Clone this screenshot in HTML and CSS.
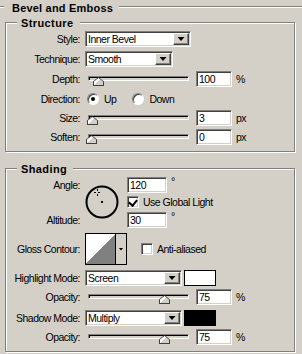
FILE: index.html
```html
<!DOCTYPE html>
<html lang="en">
<head>
  <meta charset="UTF-8">
  <title>Bevel and Emboss</title>
  <link rel="stylesheet" href="styles.css">
</head>
<body>

<div class="panel">
  <div class="panel-title">
    <span class="rule rule-short"></span>
    <span class="panel-name">Bevel and Emboss</span>
    <span class="rule"></span>
  </div>

  <!-- Structure -->
  <div class="group structure">
    <div class="group-title">Structure</div>

    <div class="row row-first">
      <span class="label">Style:</span>
      <div class="select select-style"><span class="select-value">Inner Bevel</span><span class="select-btn"></span></div>
    </div>

    <div class="row">
      <span class="label">Technique:</span>
      <div class="select select-tech"><span class="select-value">Smooth</span><span class="select-btn"></span></div>
    </div>

    <div class="row">
      <span class="label">Depth:</span>
      <div class="slider"><div class="track"></div><span class="thumb" style="left:8px"></span></div>
      <span class="num">100</span><span class="unit">%</span>
    </div>

    <div class="row">
      <span class="label">Direction:</span>
      <span class="radio checked"></span><span class="radio-text">Up</span>
      <span class="radio radio-2"></span><span class="radio-text">Down</span>
    </div>

    <div class="row row-tight">
      <span class="label">Size:</span>
      <div class="slider"><div class="track"></div><span class="thumb" style="left:2px"></span></div>
      <span class="num">3</span><span class="unit">px</span>
    </div>

    <div class="row row-tight">
      <span class="label">Soften:</span>
      <div class="slider"><div class="track"></div><span class="thumb" style="left:1px"></span></div>
      <span class="num">0</span><span class="unit">px</span>
    </div>
  </div>

  <!-- Shading -->
  <div class="group shading">
    <div class="group-title">Shading</div>

    <div class="angle-block">
      <div class="angle-labels">
        <span class="label">Angle:</span>
        <span class="label label-alt">Altitude:</span>
      </div>
      <svg class="dial" width="34" height="34" viewBox="0 0 34 34">
        <circle cx="17" cy="17" r="15.5" fill="#d4d0c8" stroke="#000" stroke-width="2"/>
        <path d="M9 7.5h2M13 7.5h2M12.5 4v2M12.5 9v2" stroke="#000" stroke-width="1"/>
        <rect x="16" y="16" width="2" height="2" fill="#000"/>
      </svg>
      <div class="angle-fields">
        <div class="field-row">
          <span class="num num-wide">120</span><span class="deg">°</span>
        </div>
        <div class="check-row">
          <span class="check checked"></span><span class="check-text">Use Global Light</span>
        </div>
        <div class="field-row field-alt">
          <span class="num num-wide">30</span><span class="deg">°</span>
        </div>
      </div>
    </div>

    <div class="row row-gloss">
      <span class="label">Gloss Contour:</span>
      <div class="contour"><span class="contour-preview"></span><span class="contour-btn"></span></div>
      <span class="check check-aa"></span><span class="check-text">Anti-aliased</span>
    </div>

    <div class="row row-mode">
      <span class="label">Highlight Mode:</span>
      <div class="select select-mode"><span class="select-value">Screen</span><span class="select-btn"></span></div>
      <span class="swatch swatch-white"></span>
    </div>

    <div class="row row-tight">
      <span class="label">Opacity:</span>
      <div class="slider"><div class="track"></div><span class="thumb" style="left:74px"></span></div>
      <span class="num">75</span><span class="unit">%</span>
    </div>

    <div class="row row-mode">
      <span class="label">Shadow Mode:</span>
      <div class="select select-mode"><span class="select-value">Multiply</span><span class="select-btn"></span></div>
      <span class="swatch swatch-black"></span>
    </div>

    <div class="row row-tight">
      <span class="label">Opacity:</span>
      <div class="slider"><div class="track"></div><span class="thumb" style="left:74px"></span></div>
      <span class="num">75</span><span class="unit">%</span>
    </div>
  </div>
</div>

</body>
</html>
```

FILE: styles.css
```css
* { box-sizing: border-box; }

body {
  margin: 0;
  background: #d4d0c8;
  font-family: "Liberation Sans", Arial, sans-serif;
  font-size: 10.5px;
  letter-spacing: -0.5px;
  color: #000;
}

.panel {
  width: 302px;
  height: 354px;
  overflow: hidden;
}

/* Section headers */
.panel-title {
  display: flex;
  margin-top: 2px;
  height: 13px;
  font-size: 11px;
  font-weight: bold;
  letter-spacing: 0.2px;
  line-height: 13px;
}

.panel-name {
  padding: 0 6px 0 8px;
}

.rule {
  flex: 1;
  height: 2px;
  margin-top: 4px;
  border-top: 1px solid #808080;
  border-bottom: 1px solid #fff;
}

.rule-short {
  flex: none;
  width: 4px;
}

.group {
  margin-left: 5px;
  width: 290px;
  border: 1px solid #808080;
  box-shadow: inset 1px 1px #fff, 1px 1px #fff;
}

.structure {
  margin-top: 7px;
  height: 130px;
}

.shading {
  margin-top: 16px;
  height: 184px;
}

.group-title {
  width: fit-content;
  margin: -6px 0 0 11px;
  padding: 0 6px 0 4px;
  background: #d4d0c8;
  font-size: 11px;
  font-weight: bold;
  letter-spacing: 0.4px;
  line-height: 13px;
}

/* Rows */
.row {
  display: flex;
  align-items: center;
  height: 16px;
  margin-top: 4px;
}

.row-first { margin-top: 1px; }
.row-tight { margin-top: 3px; }
.row-mode { margin-top: 5px; }

.label {
  flex: none;
  width: 74px;
  text-align: right;
  line-height: 16px;
}

/* Dropdowns */
.select {
  display: flex;
  height: 16px;
  margin-left: 5px;
  padding: 1px;
  background: #fff;
  border: 1px solid;
  border-color: #808080 #fff #fff #808080;
  box-shadow: inset 1px 1px #404040, inset -1px -1px #d4d0c8;
}

.select-style { width: 106px; }
.select-tech { width: 88px; }
.select-mode { width: 97px; }

.select-value {
  flex: 1;
  padding-left: 1px;
  line-height: 13px;
}

.select-btn {
  display: flex;
  align-items: center;
  justify-content: center;
  width: 16px;
  height: 12px;
  background: #d4d0c8;
  border: 1px solid;
  border-color: #fff #404040 #404040 #fff;
  box-shadow: inset -1px -1px #808080;
}

.select-btn::after,
.contour-btn::after {
  content: "";
  width: 7px;
  height: 4px;
  background: #000;
  clip-path: polygon(0 0, 100% 0, 50% 100%);
}

/* Sliders */
.slider {
  position: relative;
  flex: none;
  width: 106px;
  height: 16px;
  margin-left: 5px;
}

.track {
  width: 101px;
  height: 5px;
  margin: 5px 0 0 3px;
  background: #d4d0c8;
  border: 1px solid;
  border-color: #808080 #fff #fff #808080;
  box-shadow: inset 1px 1px #000;
}

.thumb {
  position: absolute;
  top: 6px;
  width: 11px;
  height: 9px;
  background: #404040;
  clip-path: polygon(50% 0, 100% 50%, 100% 100%, 0 100%, 0 50%);
}

.thumb::after {
  content: "";
  position: absolute;
  left: 1px;
  top: 1px;
  width: 9px;
  height: 7px;
  background: linear-gradient(135deg, #fff 45%, #d4d0c8 45%);
  clip-path: polygon(50% 0, 100% 50%, 100% 100%, 0 100%, 0 50%);
}

/* Number fields */
.num {
  flex: none;
  width: 36px;
  height: 16px;
  margin-left: 5px;
  padding: 0 2px;
  background: #fff;
  border: 1px solid;
  border-color: #808080 #fff #fff #808080;
  box-shadow: inset 1px 1px #404040, inset -1px -1px #d4d0c8;
  line-height: 14px;
}

.num-wide {
  width: 40px;
  margin-left: 0;
}

.unit { margin-left: 4px; }

/* Radios and checkboxes */
.radio {
  position: relative;
  flex: none;
  width: 12px;
  height: 12px;
  margin-left: 7px;
  border-radius: 50%;
  background: #fff;
  border: 1px solid;
  border-color: #808080 #fff #fff #808080;
  box-shadow: inset 1px 1px #404040;
}

.radio.checked::after {
  content: "";
  position: absolute;
  left: 3px;
  top: 3px;
  width: 4px;
  height: 4px;
  border-radius: 50%;
  background: #000;
}

.radio-2 { margin-left: 16px; }
.radio-text { margin-left: 5px; }

.check {
  position: relative;
  flex: none;
  width: 12px;
  height: 12px;
  background: #fff;
  border: 1px solid;
  border-color: #808080 #fff #fff #808080;
  box-shadow: inset 1px 1px #404040, inset -1px -1px #d4d0c8;
}

.check.checked::after {
  content: "";
  position: absolute;
  left: 2px;
  top: 1px;
  width: 4px;
  height: 6px;
  border: solid #000;
  border-width: 0 2px 2px 0;
  transform: rotate(40deg);
}

.check-text { margin-left: 4px; }

/* Angle block */
.angle-block {
  display: flex;
  margin-top: 1px;
}

.angle-labels {
  display: flex;
  flex-direction: column;
}

.label-alt { margin-top: 19px; }

.dial {
  flex: none;
  margin: 8px 0 0 5px;
}

.angle-fields {
  display: flex;
  flex-direction: column;
  margin-left: 8px;
}

.field-row {
  display: flex;
  align-items: flex-start;
}

.field-alt { margin-top: 4px; }

.deg {
  margin-left: 4px;
  line-height: 9px;
}

.check-row {
  display: flex;
  align-items: center;
  height: 12px;
  margin-top: 3px;
}

/* Gloss contour */
.row-gloss {
  height: 32px;
  margin-top: 5px;
}

.contour {
  display: flex;
  width: 42px;
  height: 32px;
  margin-left: 5px;
  border: 1px solid #000;
}

.contour-preview {
  width: 30px;
  border-right: 1px solid #000;
  background: linear-gradient(to bottom right, #fff 50%, #808080 50%);
}

.contour-btn {
  flex: 1;
  display: flex;
  align-items: center;
  justify-content: center;
}

.contour-btn::after {
  width: 5px;
  height: 3px;
}

.check-aa { margin-left: 14px; }

/* Colour swatches */
.swatch {
  flex: none;
  width: 32px;
  height: 16px;
  margin-left: 2px;
}

.swatch-white {
  background: #fff;
  border: 1px solid #000;
}

.swatch-black { background: #000; }
```
